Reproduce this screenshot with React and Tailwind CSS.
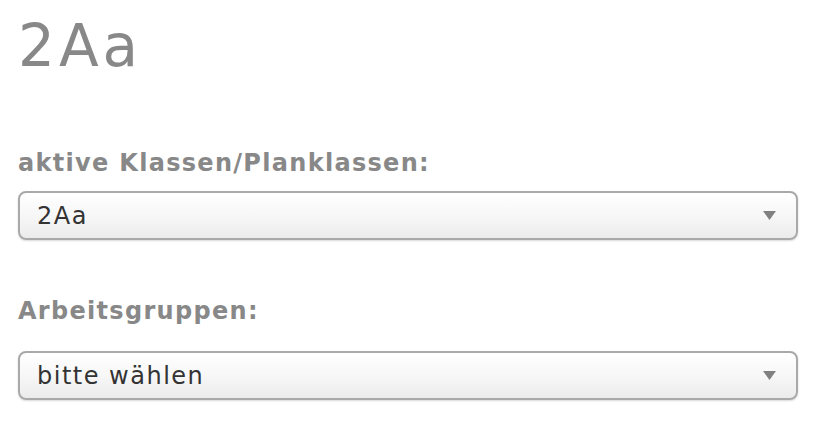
import React from 'react';

const SelectBox = ({ value }) => (
  <div className="flex h-[49px] w-[780px] items-center justify-between rounded-[8px] border-2 border-[#a9a9a9] bg-gradient-to-b from-white via-[#f7f7f7] to-[#ececec] pl-[17px] pr-[20px] shadow-[0_1px_2px_rgba(0,0,0,0.15)]">
    <span className="text-[24px] tracking-[1.5px] text-[#333]">{value}</span>
    <svg width="13" height="9" viewBox="0 0 13 9">
      <polygon points="0,0 13,0 6.5,9" fill="#808080" />
    </svg>
  </div>
);

export default function App() {
  return (
    <div className="h-[433px] w-[821px] bg-white pl-[18px] font-['DejaVu_Sans',sans-serif]">
      <h1 className="pt-[14px] text-[58px] leading-[64px] tracking-[4px] text-[#888]">2Aa</h1>

      <div className="mt-[70px]">
        <label className="block text-[24px] font-bold leading-[30px] tracking-[1.3px] text-[#888]">aktive Klassen/Planklassen:</label>
        <div className="mt-[13px]">
          <SelectBox value="2Aa" />
        </div>
      </div>

      <div className="mt-[56px]">
        <label className="block text-[24px] font-bold leading-[30px] tracking-[1.3px] text-[#888]">Arbeitsgruppen:</label>
        <div className="mt-[25px]">
          <SelectBox value="bitte wählen" />
        </div>
      </div>
    </div>
  );
}
